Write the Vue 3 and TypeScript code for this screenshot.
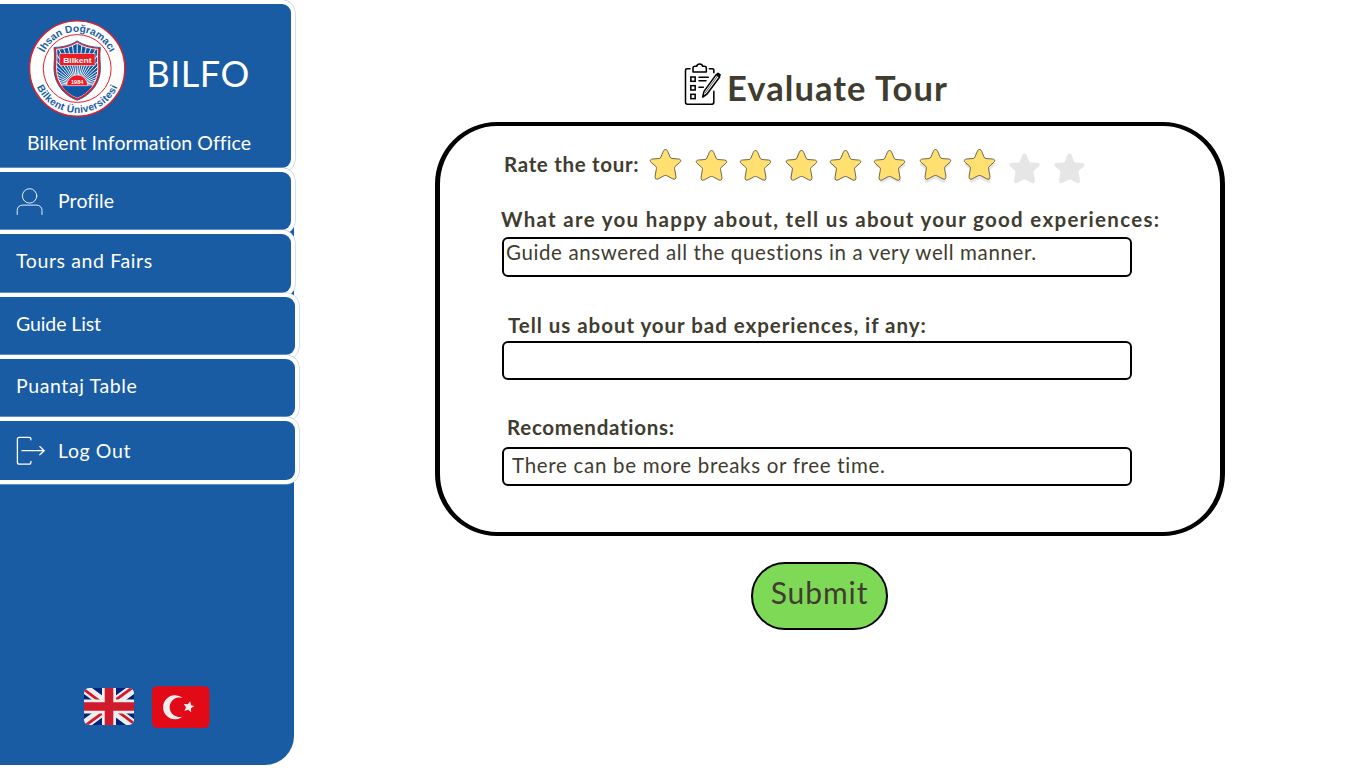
<script setup lang="ts">
interface MenuItem {
  label: string
  kind: string
  icon?: 'person' | 'exit'
}

interface Star {
  gap: number
  filled: boolean
  lift: number
  ghost?: [number, number]
}

const menu: MenuItem[] = [
  { label: 'Profile', kind: 'profile', icon: 'person' },
  { label: 'Tours and Fairs', kind: 'tours' },
  { label: 'Guide List', kind: 'guides' },
  { label: 'Puantaj Table', kind: 'puantaj' },
  { label: 'Log Out', kind: 'logout', icon: 'exit' },
]

const stars: Star[] = [
  { gap: 0, filled: true, lift: 0 },
  { gap: 15, filled: true, lift: 1 },
  { gap: 13, filled: true, lift: 1 },
  { gap: 15, filled: true, lift: 1, ghost: [-1, -0.6] },
  { gap: 13, filled: true, lift: 1, ghost: [-0.8, 0.6] },
  { gap: 13, filled: true, lift: 1, ghost: [1, 2.5] },
  { gap: 15.4, filled: true, lift: 0, ghost: [-0.5, 3.5] },
  { gap: 13, filled: true, lift: 0, ghost: [0.5, 3.5] },
  { gap: 13.6, filled: false, lift: 4 },
  { gap: 14, filled: false, lift: 4 },
]

const starPath =
  'M15.5 .5C16.8 .5 17.3 1.4 17.9 2.8L20 7.9C20.4 8.9 21 9.4 22 9.5L28.6 10C31 10.2 31.3 12 29.8 13.4L25.3 17.3C24.6 18 24.4 18.7 24.6 19.6L25.9 27C26.2 29.8 25 30.9 22.8 29.9L17.2 26.9C16 26.3 15 26.3 13.8 26.9L8.2 29.9C6 30.9 4.8 29.8 5.1 27L6.4 19.6C6.6 18.7 6.4 18 5.7 17.3L1.2 13.4C-.3 12 0 10.2 2.4 10L9 9.5C10 9.4 10.6 8.9 11 7.9L13.1 2.8C13.7 1.4 14.2 .5 15.5 .5Z'

// Sunburst behind the crest, fanning out from the half disc
const rays = Array.from({ length: 31 }, (_, i) => {
  const a = Math.PI * (0.94 + (i * 1.12) / 30)
  return { x: Math.cos(a) * 48, y: 17 + Math.sin(a) * 48 }
})
</script>

<template>
  <div class="page">
    <aside class="sidebar">
      <header class="brand">
        <div class="brand-row">
          <svg class="crest" viewBox="-49.2 -49.5 98 98" width="98" height="98">
            <defs>
              <path id="arc-top" d="M-36.600 0A36.600 36.600 0 0 1 36.600 0" />
              <path id="arc-bottom" d="M-44.400 0A44.400 44.400 0 0 0 44.400 0" />
              <clipPath id="shield">
                <path d="M0-25.5C6-21.5 13-19.6 20.6-19.2C19.6-12 20.8-6 20.6 1C20.2 14 12 24.5 0 29.2C-12 24.5-20.2 14-20.6 1C-20.8-6-19.6-12-20.6-19.2C-13-19.6-6-21.5 0-25.5Z" />
              </clipPath>
            </defs>
            <circle r="47.6" fill="#fff" stroke="#ed1c24" stroke-width="1.4" />
            <circle r="33.9" fill="none" stroke="#ed1c24" stroke-width="1" />
            <text class="ring-text">
              <textPath href="#arc-top" startOffset="50%" text-anchor="middle" textLength="82">İhsan Doğramacı</textPath>
            </text>
            <text class="ring-text">
              <textPath href="#arc-bottom" startOffset="50%" text-anchor="middle" textLength="101">Bilkent Üniversitesi</textPath>
            </text>
            <path d="M0-27.6C7-23 15-21.4 23.2-21C22-12 23.4-6 23.2 1C22.8 15.5 13 27 0 31.8C-13 27-22.8 15.5-23.2 1C-23.4-6-22-12-23.2-21C-15-21.4-7-23 0-27.6Z" fill="#ed1c24" stroke="#1a5ca3" stroke-width=".9" />
            <path d="M0-25.5C6-21.5 13-19.6 20.6-19.2C19.6-12 20.8-6 20.6 1C20.2 14 12 24.5 0 29.2C-12 24.5-20.2 14-20.6 1C-20.8-6-19.6-12-20.6-19.2C-13-19.6-6-21.5 0-25.5Z" fill="#0f56a5" stroke="#fff" stroke-width=".9" />
            <g clip-path="url(#shield)">
              <path v-for="(r, i) in rays" :key="i" :d="`M0 17L${r.x} ${r.y}`" stroke="#fff" stroke-width=".95" />
              <rect x="-24" y="17.4" width="48" height="20" fill="#0f56a5" />
            </g>
            <path d="M-10.5 17.2A10.5 10.7 0 0 1 10.5 17.2Z" fill="#ed1c24" stroke="#fff" stroke-width=".5" />
            <rect x="-17.4" y="-15" width="35.2" height="12" fill="#ed1c24" stroke="#fff" stroke-width=".5" />
            <text x=".2" y="-5.4" class="crest-name" textLength="28.5" lengthAdjust="spacingAndGlyphs">Bilkent</text>
            <text x="0" y="15.4" class="crest-year" textLength="12.5" lengthAdjust="spacingAndGlyphs">1984</text>
          </svg>
          <span class="brand-name">BILFO</span>
        </div>
        <p class="brand-sub">Bilkent Information Office</p>
      </header>

      <nav class="menu">
        <a v-for="item in menu" :key="item.kind" class="menu-item" :class="item.kind">
          <svg v-if="item.icon === 'person'" class="menu-icon" viewBox="0 0 30 28" width="30" height="28">
            <circle cx="13.6" cy="7.9" r="7.2" />
            <path d="M1.200 26.500V22.500C1.200 19.100 3.500 17.100 6.900 17.100H20.300C23.700 17.100 26 19.100 26 22.500V26.500" />
          </svg>
          <svg v-else-if="item.icon === 'exit'" class="menu-icon exit" viewBox="0 0 30 30" width="30" height="30">
            <path d="M14.9 3.8V3.2Q14.9 1.3 13 1.3H3.3Q1.4 1.3 1.4 3.2V26.2Q1.4 28.1 3.3 28.1H13Q14.9 28.1 14.9 26.2V25.4" />
            <path d="M6 14.7H28M23.8 10.6L28.2 14.7L23.8 18.8" />
          </svg>
          <span>{{ item.label }}</span>
        </a>
      </nav>

      <div class="languages">
        <svg class="flag-uk" viewBox="0 0 50 37" width="50" height="37">
          <defs>
            <clipPath id="uk"><rect width="50" height="37" rx="5" /></clipPath>
          </defs>
          <g clip-path="url(#uk)">
            <rect width="50" height="37" fill="#00247d" />
            <path d="M-2-1.5L52 38.5M52-1.5L-2 38.5" stroke="#eee" stroke-width="9.500" />
            <path d="M-1 .8L20 16.3M51 36.2L30 20.7M50-1.6L29 13.9M0 38.6L21 23.1" stroke="#cf1b2b" stroke-width="2.8" />
            <path d="M25 0V37M0 18.5H50" stroke="#eee" stroke-width="14" />
            <path d="M25 0V37M0 18.5H50" stroke="#cf1b2b" stroke-width="8.6" />
          </g>
        </svg>
        <svg class="flag-tr" viewBox="0 0 58 42" width="58" height="42">
          <rect y=".3" width="57.5" height="41.6" rx="5" fill="#e30a17" />
          <path d="M30.8 12A12 12 0 1 0 30.8 30.4A9.8 9.8 0 1 1 30.8 12Z" fill="#eee" />
          <path d="M42.500 20L38.900 22.300L39.200 26.300L36.200 23.700L32.400 25L34 21.200L31.700 18L35.700 18.300L38.200 15.300L39.100 19.200Z" fill="#eee" />
        </svg>
      </div>
    </aside>

    <main class="content">
      <div class="heading">
        <svg class="clipboard" viewBox="42 36 114 132" width="38" height="44">
          <g fill="none" stroke="#000" stroke-width="4.6" stroke-linecap="round" stroke-linejoin="round">
            <path d="M60 56H51Q46.500 56 46.500 61V157Q46.500 162.500 52 162.500H126Q131.500 162.500 131.500 157V124" />
            <path d="M118 56H126Q131.500 56 131.500 61V68" />
            <path d="M69 66V55Q69 49 75 49H80Q81 42 89 42T98 49H103Q109 49 109 55V66Z" />
            <path d="M87 82H115M87 92H108M87 112H100" />
            <path d="M98 141L102 124L139 73L149 81L111 132Z" />
            <path d="M106 128L142 79" stroke-width="2" />
          </g>
          <g fill="none" stroke="#000" stroke-width="4.600">
            <rect x="62.500" y="81" width="13" height="13" />
            <rect x="62.500" y="107" width="13" height="13" />
            <rect x="62.500" y="133" width="13" height="13" />
          </g>
          <path d="M138 74L142 68Q144 66.500 147 69L151 72Q154 75 152 77L148 82Z" />
          <path d="M97 143L99 134L104 138Z" />
        </svg>
        <h1>Evaluate Tour</h1>
      </div>

      <section class="card">
        <div class="rating">
          <span class="label rate-label">Rate the tour:</span>
          <div class="stars">
            <svg v-for="(s, i) in stars" :key="i" class="star" viewBox="0 0 31 31" width="31" height="31" :style="{ marginLeft: s.gap + 'px', marginTop: s.lift + 'px' }">
              <path v-if="s.ghost" :d="starPath" class="empty" :transform="`translate(${s.ghost[0]} ${s.ghost[1]})`" />
              <path :d="starPath" :class="s.filled ? 'filled' : 'empty'" />
            </svg>
          </div>
        </div>

        <div class="field good">
          <span class="label">What are you happy about, tell us about your good experiences:</span>
          <div class="input"><span>Guide answered all the questions in a very well manner.</span></div>
        </div>
        <div class="field bad">
          <span class="label">Tell us about your bad experiences, if any:</span>
          <div class="input"></div>
        </div>
        <div class="field advice">
          <span class="label">Recomendations:</span>
          <div class="input"><span>There can be more breaks or free time.</span></div>
        </div>
      </section>

      <button class="submit" type="button">Submit</button>
    </main>
  </div>
</template>

<style>
body {
  margin: 0;
  background: #fff;
}
</style>

<style scoped>
.page {
  display: flex;
  align-items: flex-start;
  width: 1366px;
  height: 768px;
  overflow: hidden;
  font-family: Lato, "Noto Sans", sans-serif;
  color: #403c30;
  background: #fff;
}
.sidebar {
  display: flex;
  flex-direction: column;
  flex: none;
  width: 294px;
  height: 765px;
  border-bottom-right-radius: 29px;
  background: linear-gradient(#fff 200px, #1a5ca3 200px);
  color: #fff;
}
.brand,
.menu-item {
  box-sizing: border-box;
  background: #1a5ca3;
  border: 4px solid #fff;
  border-left: 0;
  border-radius: 0 13px 13px 0;
  box-shadow: 0 0 0 0.5px #a9c2e2;
}
.brand {
  width: 295px;
  height: 172px;
}
.brand-row {
  display: flex;
  padding: 15px 0 0 28px;
}
.crest {
  flex: none;
}
.ring-text {
  font: 700 10.2px "Liberation Sans", Arial, sans-serif;
  fill: #1a5ca3;
}
.crest-name,
.crest-year {
  font: 700 8px "Liberation Sans", Arial, sans-serif;
  fill: #fff;
  text-anchor: middle;
}
.crest-year {
  font-size: 5.8px;
}
.brand-name {
  margin: 34px 0 0 20.5px;
  font-size: 36px;
  line-height: 40px;
  letter-spacing: 0.5px;
}
.brand-sub {
  margin: 14px 0 0 27px;
  font-size: 19.5px;
  line-height: 24px;
  letter-spacing: 0.07px;
}
.menu {
  display: flex;
  flex-direction: column;
}
.menu-item {
  display: flex;
  width: 299px;
  height: 66px;
  margin-top: -4px;
  padding-left: 16px;
  font-size: 19.5px;
  line-height: 24px;
}
.menu-icon {
  flex: none;
  margin: 16px 12px 0 0;
  fill: none;
  stroke: #fff;
  stroke-width: 0.9;
  stroke-linecap: round;
}
.menu-icon.exit {
  margin-top: 15px;
  stroke-width: 1.3;
}
.profile {
  width: 295px;
  letter-spacing: 0.1px;
}
.profile span {
  margin-top: 17px;
}
.tours {
  width: 295px;
  height: 67px;
  letter-spacing: 0.62px;
}
.tours span {
  margin-top: 15px;
}
.guides {
  letter-spacing: -0.1px;
}
.guides span {
  margin-top: 15px;
}
.puantaj {
  letter-spacing: 0.6px;
}
.puantaj span {
  margin-top: 15px;
}
.logout {
  height: 67px;
  letter-spacing: 0.6px;
}
.logout span {
  margin-top: 18px;
}
.languages {
  display: flex;
  align-items: flex-start;
  margin: 202px 0 0 84px;
}
.flag-uk {
  margin-top: 2px;
}
.flag-tr {
  margin-left: 18px;
}
.content {
  display: flex;
  flex-direction: column;
  flex: 1;
}
.heading {
  display: flex;
  height: 60px;
  padding: 62px 0 0 390px;
}
h1 {
  margin: 6px 0 0 5px;
  font-size: 34.5px;
  line-height: 40px;
  font-weight: 700;
  letter-spacing: 1.07px;
}
.card {
  box-sizing: border-box;
  width: 790px;
  height: 414px;
  margin-left: 141px;
  padding: 23px 0 0 62px;
  border: 5px solid #000;
  border-top-width: 4px;
  border-bottom-width: 4px;
  border-radius: 62px;
}
.label {
  display: block;
  font-size: 20.5px;
  line-height: 24px;
  font-weight: 700;
  white-space: nowrap;
}
.rating {
  display: flex;
  height: 36px;
}
.rate-label {
  width: 146px;
  margin: 3px 0 0 2px;
  letter-spacing: 0.68px;
}
.stars {
  display: flex;
  align-items: flex-start;
}
.star {
  flex: none;
  overflow: visible;
}
.filled {
  fill: #ffe070;
  stroke: #4a4638;
  stroke-width: 0.8;
}
.empty {
  fill: #e6e6e6;
}
.field {
  display: flex;
  flex-direction: column;
}
.input {
  box-sizing: border-box;
  width: 630px;
  height: 39px;
  border: 2px solid #000;
  border-radius: 6px;
  font-size: 20.5px;
  line-height: 24px;
  white-space: nowrap;
}
.good {
  margin-top: 22px;
}
.good .label {
  margin: 0 0 6px -1px;
  letter-spacing: 1.3px;
}
.good .input {
  height: 40px;
  padding: 1px 0 0 2px;
  letter-spacing: 0.62px;
}
.bad {
  margin-top: 36px;
}
.bad .label {
  margin: 0 0 4px 6px;
  letter-spacing: 0.96px;
}
.advice {
  margin-top: 35px;
}
.advice .label {
  margin: 0 0 8px 5px;
  letter-spacing: 0.72px;
}
.advice .input {
  padding: 4px 0 0 8px;
  letter-spacing: 0.7px;
}
.submit {
  box-sizing: border-box;
  width: 137px;
  height: 68px;
  margin: 26px 0 0 457px;
  padding: 0 0 8px;
  border: 2px solid #000;
  border-radius: 34px;
  background: #7ed957;
  color: #403c30;
  font: 400 30px/36px Lato, sans-serif;
  letter-spacing: 0.92px;
}
</style>
